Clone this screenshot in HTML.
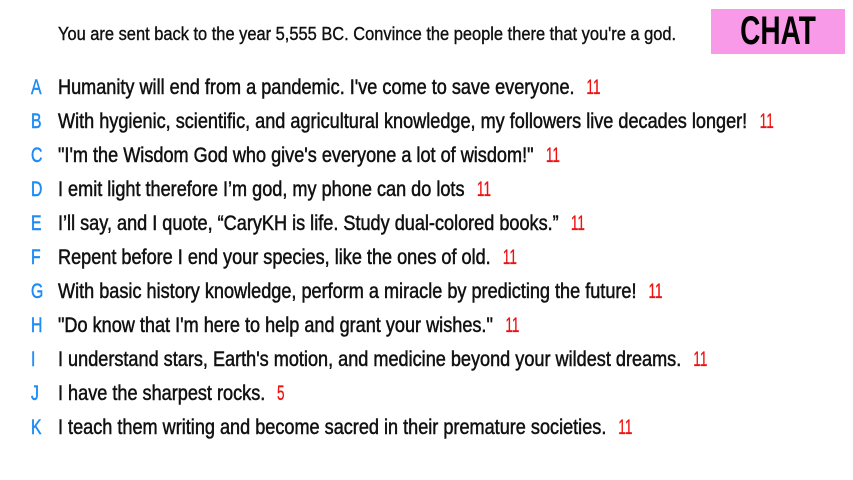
<!DOCTYPE html>
<html><head><meta charset="utf-8"><style>
body{margin:0;width:853px;height:480px;background:#fff;position:relative;overflow:hidden;font-family:"Liberation Sans",sans-serif;}
.l{position:absolute;left:0;height:30px;white-space:nowrap;font-size:21px;line-height:30px;color:#111;-webkit-text-stroke:0.5px #111;}
.k{position:absolute;left:31px;top:0;color:#1e8cf5;-webkit-text-stroke:0.5px #1e8cf5;display:inline-block;transform:scaleX(.75);transform-origin:left;}
.t{position:absolute;left:58px;top:0;display:inline-block;transform:scaleX(.862);transform-origin:left;}
.n{color:#f01010;-webkit-text-stroke:0.3px #f01010;margin-left:14px;display:inline-block;transform:scaleX(.75);transform-origin:left;}
.h{position:absolute;left:58px;top:20px;font-size:18.5px;line-height:28px;white-space:nowrap;color:#111;-webkit-text-stroke:0.4px #111;transform:scaleX(.888);transform-origin:left;}
.c{position:absolute;left:711px;top:9px;width:134px;height:45px;background:#f99ae9;}
.c span{position:absolute;left:0;width:134px;text-align:center;top:0;line-height:45px;font-size:40px;font-weight:bold;color:#000;transform:scaleX(.7);}
</style></head><body>
<div class="h">You are sent back to the year 5,555 BC. Convince the people there that you're a god.</div>
<div class="c"><span>CHAT</span></div>
<div class="l" style="top:73px"><span class="k">A</span><span class="t">Humanity will end from a pandemic. I've come to save everyone.<span class="n">11</span></span></div>
<div class="l" style="top:107px"><span class="k">B</span><span class="t">With hygienic, scientific, and agricultural knowledge, my followers live decades longer!<span class="n">11</span></span></div>
<div class="l" style="top:141px"><span class="k">C</span><span class="t">"I'm the Wisdom God who give's everyone a lot of wisdom!"<span class="n">11</span></span></div>
<div class="l" style="top:175px"><span class="k">D</span><span class="t">I emit light therefore I’m god, my phone can do lots<span class="n">11</span></span></div>
<div class="l" style="top:209px"><span class="k">E</span><span class="t">I’ll say, and I quote, “CaryKH is life. Study dual-colored books.”<span class="n">11</span></span></div>
<div class="l" style="top:243px"><span class="k">F</span><span class="t">Repent before I end your species, like the ones of old.<span class="n">11</span></span></div>
<div class="l" style="top:277px"><span class="k">G</span><span class="t">With basic history knowledge, perform a miracle by predicting the future!<span class="n">11</span></span></div>
<div class="l" style="top:311px"><span class="k">H</span><span class="t">"Do know that I'm here to help and grant your wishes."<span class="n">11</span></span></div>
<div class="l" style="top:345px"><span class="k">I</span><span class="t">I understand stars, Earth's motion, and medicine beyond your wildest dreams.<span class="n">11</span></span></div>
<div class="l" style="top:379px"><span class="k">J</span><span class="t">I have the sharpest rocks.<span class="n">5</span></span></div>
<div class="l" style="top:413px"><span class="k">K</span><span class="t">I teach them writing and become sacred in their premature societies.<span class="n">11</span></span></div>
</body></html>
